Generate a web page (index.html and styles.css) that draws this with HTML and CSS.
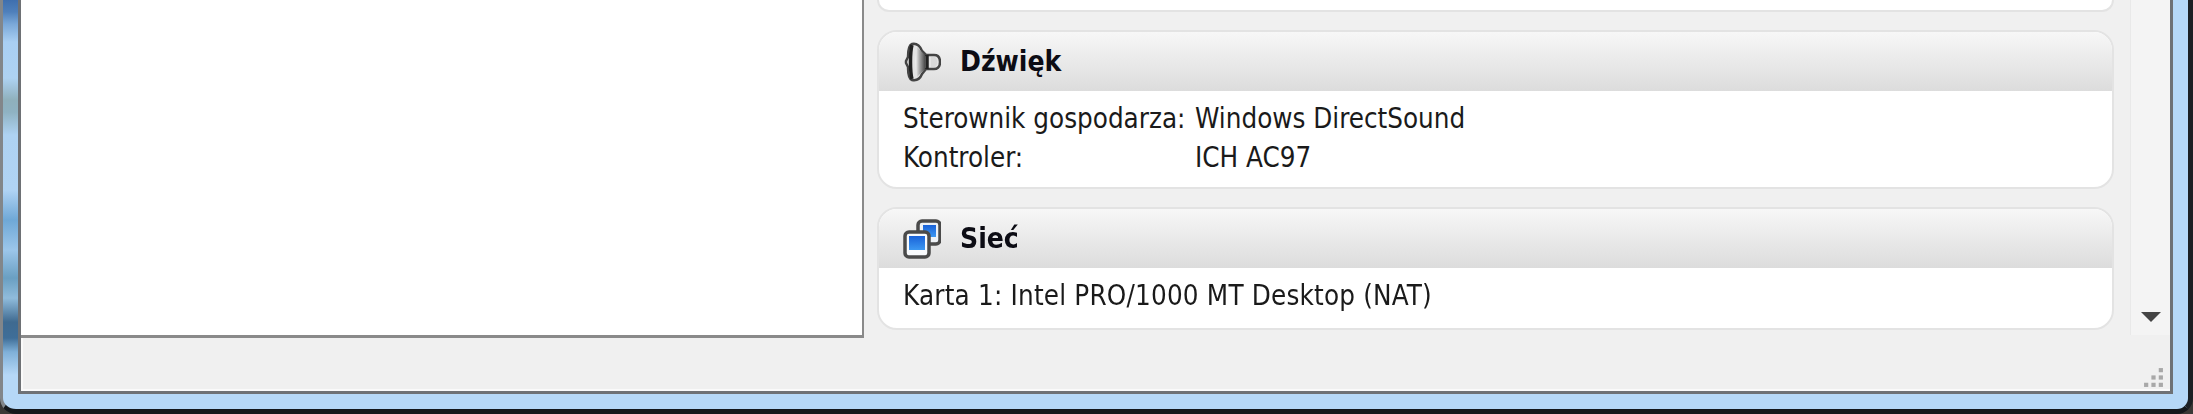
FILE: index.html
```html
<!DOCTYPE html>
<html lang="pl">
<head>
<meta charset="utf-8">
<title>Szczegóły</title>
<link rel="stylesheet" href="styles.css">
</head>
<body>
<div class="window">
  <div class="client">
    <div class="main">
      <div class="list"></div>
      <div class="details">
        <div class="cards">
          <div class="card stub"></div>
          <section class="card">
            <header class="card-head">
              <svg class="icon" viewBox="0 0 38 40" aria-hidden="true">
                <defs>
                  <linearGradient id="cone" x1="0" x2="1" y1="0" y2="0">
                    <stop offset="0" stop-color="#f4f4f4"/>
                    <stop offset="0.5" stop-color="#9a9a9a"/>
                    <stop offset="1" stop-color="#4a4a4a"/>
                  </linearGradient>
                  <linearGradient id="screen" x1="0" x2="0" y1="0" y2="1">
                    <stop offset="0" stop-color="#1a62d8"/>
                    <stop offset="1" stop-color="#3c98f2"/>
                  </linearGradient>
                </defs>
                <path d="M9 2 C14 1 17 4 19 9 L23 13 H31 C36 13 37 17 37 20 C37 24 36 27 31 27 H23 L19 32 C17 37 14 39 9 38 C6 37 5 32 5 25 L3 21 V19 L5 15 C5 8 6 3 9 2 Z" fill="#e4e4e4" stroke="#444" stroke-width="2.5" stroke-linejoin="round"/>
                <path d="M9 3 C7 10 7 30 9 37" fill="none" stroke="#222" stroke-width="3.5"/>
                <path d="M14 5 C12 14 12 26 14 35 L22 27 V13 Z" fill="url(#cone)"/>
                <path d="M24 13 V27" stroke="#222" stroke-width="3.5"/>
                <path d="M28 15 H32 C35 17 35 23 32 25 H28 Z" fill="#d8d8d8"/>
              </svg>
              <h2 class="card-title">Dźwięk</h2>
            </header>
            <div class="card-body rows">
              <span>Sterownik gospodarza:</span><span>Windows DirectSound</span>
              <span>Kontroler:</span><span>ICH AC97</span>
            </div>
          </section>
          <section class="card">
            <header class="card-head">
              <svg class="icon" viewBox="0 0 38 40" aria-hidden="true">
                <rect x="15" y="2" width="22" height="23" rx="4" fill="#eef2f6" stroke="#4a4a4a" stroke-width="3.5"/>
                <rect x="20" y="6" width="13" height="12" fill="url(#screen)"/>
                <rect x="2" y="13" width="24" height="25" rx="4" fill="#f8fafc" stroke="#4a4a4a" stroke-width="3.5"/>
                <rect x="6" y="17" width="16" height="14" fill="url(#screen)"/>
              </svg>
              <h2 class="card-title">Sieć</h2>
            </header>
            <div class="card-body">Karta 1: Intel PRO/1000 MT Desktop (NAT)</div>
          </section>
        </div>
        <div class="scrollbar"><span class="arrow"></span></div>
      </div>
    </div>
    <div class="status">
      <svg class="grip" viewBox="0 0 20 20" aria-hidden="true">
        <g fill="#a8a8a8">
          <rect x="15" y="1" width="4" height="4"/>
          <rect x="8" y="8" width="4" height="4"/><rect x="15" y="8" width="4" height="4"/>
          <rect x="1" y="15" width="4" height="4"/><rect x="8" y="15" width="4" height="4"/><rect x="15" y="15" width="4" height="4"/>
        </g>
      </svg>
    </div>
  </div>
</div>
</body>
</html>
```
FILE: styles.css
```css
* { box-sizing: border-box; }
html, body { margin: 0; height: 100%; background: #3a3836; }
body { overflow: hidden; }
.window {
  width: 2193px;
  height: 414px;
  padding: 0 15px 15px 15px;
  border-left: 3px solid #82868a;
  border-right: 5px solid #1c2024;
  border-bottom: 5px solid #14181c;
  border-radius: 0 0 16px 16px;
  background:
    linear-gradient(to bottom, #3f6fae 0, #4f80bb 12px, #7aa8d8 24px, #a9cff3 42px, #aed2f2 78px, #8fb0bc 100px, #8fb2c2 112px, #aed2f2 135px, #b0d3f4 190px, #6fa8d6 220px, #9cc6ea 250px, #6a9fc2 278px, #90bcdc 298px, #3f6a90 322px, #3f6e98 338px, #7fb0d8 352px, #b6d8f7 375px) 0 0 / 15px 100% no-repeat,
    #b6d8f7;
}
.client {
  height: 100%;
  display: flex;
  flex-direction: column;
  background: #f0f0f0;
  border: 3px solid #6e7175;
  border-top: 0;
}
.main {
  flex: 1;
  min-height: 0;
  display: flex;
}
.list {
  width: 843px;
  background: #fff;
  border-right: 2px solid #8a8a8a;
  border-bottom: 3px solid #8a8a8a;
}
.details {
  flex: 1;
  min-width: 0;
  display: flex;
  padding-left: 13px;
  filter: blur(0.5px);
}
.cards {
  width: 1238px;
  display: flex;
  flex-direction: column;
  gap: 18px;
}
.card {
  background: #fff;
  border: 2px solid #e3e3e3;
  border-radius: 20px;
  overflow: hidden;
}
.stub {
  height: 12px;
  border-top: 0;
  border-radius: 0 0 20px 20px;
}
.card-head {
  height: 59px;
  display: flex;
  align-items: center;
  gap: 19px;
  padding-left: 24px;
  background: linear-gradient(to bottom, #f7f7f7, #dcdcdc);
}
.icon {
  width: 38px;
  height: 40px;
  flex: none;
}
.card-title {
  margin: 0;
  font: 700 28px "DejaVu Sans Condensed", "DejaVu Sans", sans-serif;
  font-stretch: condensed;
  color: #0c0c14;
}
.card-body {
  padding: 8px 24px 13px;
  font: 400 27.5px/39px "DejaVu Sans Condensed", "DejaVu Sans", sans-serif;
  font-stretch: condensed;
  letter-spacing: 0.2px;
  color: #1a1a1a;
}
.rows {
  display: grid;
  grid-template-columns: 292px 1fr;
  padding-bottom: 10px;
  letter-spacing: 0;
}
.scrollbar {
  width: 40px;
  margin-left: 16px;
  height: 335px;
  background: #f4f4f4;
  border-left: 1px solid #e9e9e9;
  display: flex;
  justify-content: center;
  align-items: flex-end;
  padding-bottom: 13px;
}
.arrow {
  width: 0;
  height: 0;
  border-left: 10px solid transparent;
  border-right: 10px solid transparent;
  border-top: 10px solid #444;
}
.status {
  height: 53px;
  flex: none;
  display: flex;
  justify-content: flex-end;
  align-items: flex-end;
  padding: 0 6px 3px 0;
  box-shadow: inset 2px -2px 0 #fafafa;
}
.grip {
  width: 21px;
  height: 21px;
}
```
